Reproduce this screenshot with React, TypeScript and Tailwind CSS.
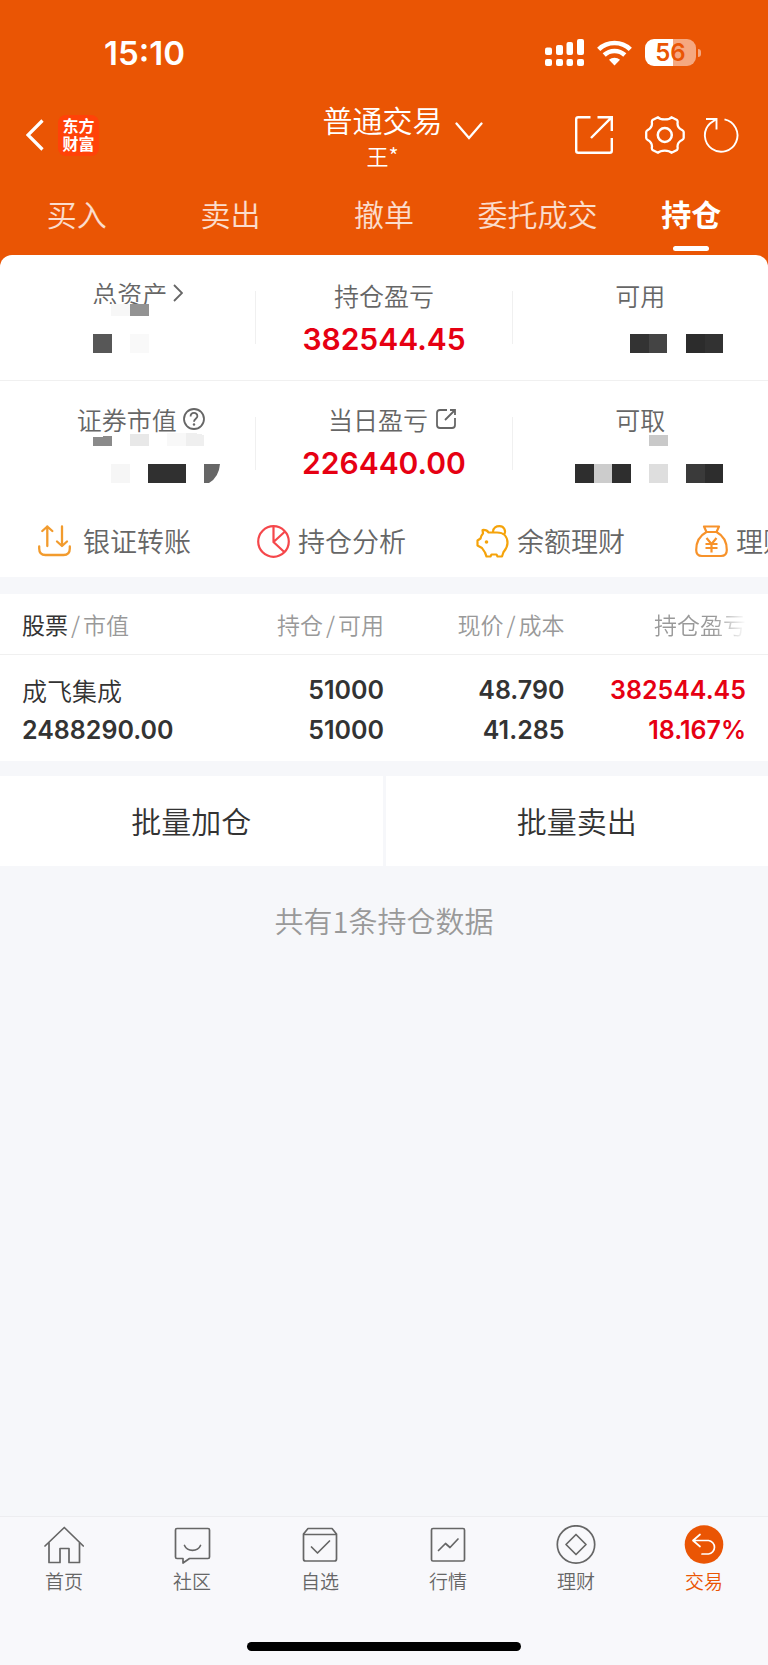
import type { ReactNode } from "react";

const tabs = ["买入", "卖出", "撤单", "委托成交", "持仓"];

type Block = [x: number, y: number, w: number, h: number, fill: string];

function SignalIcon() {
  return (
    <svg width="39" height="27" viewBox="0 0 39 27" fill="#fff" aria-hidden="true">
      <rect x="0" y="8.500" width="7" height="7.500" rx="2" />
      <rect x="11" y="6" width="7" height="10" rx="2" />
      <rect x="21.500" y="3" width="6.500" height="13" rx="2" />
      <rect x="32" y="0" width="7" height="16" rx="2" />
      <rect x="0" y="20" width="7" height="7" rx="2" />
      <rect x="11" y="20" width="7" height="7" rx="2" />
      <rect x="21.500" y="20" width="6.500" height="7" rx="2" />
      <rect x="32" y="20" width="7" height="7" rx="2" />
    </svg>
  );
}

function WifiIcon() {
  return (
    <svg width="35" height="26" viewBox="0 0 35 26" fill="none" stroke="#fff" strokeWidth="4.600" aria-hidden="true">
      <path d="M1.700 9.300C10.500 0.900 24.500 0.900 33.300 9.300" />
      <path d="M7.200 15C13 9.600 22 9.600 27.800 15" />
      <path d="M17.500 25.500L12 19.800C15 17 20 17 23 19.800Z" fill="#fff" stroke="none" />
    </svg>
  );
}

function Battery() {
  return (
    <div className="flex items-center gap-0.5">
      <div className="flex h-[27px] w-[51px] items-center justify-center rounded-[9px] bg-linear-to-r from-white from-55% to-[#f5a880] to-55% font-['Inter'] text-2xl font-semibold leading-none text-[#ea5504]">
        56
      </div>
      <div className="h-2 w-[3px] rounded-r-full bg-[#f5a880]" />
    </div>
  );
}

function BackIcon() {
  return (
    <svg width="18" height="32" viewBox="0 0 18 32" fill="none" stroke="#fff" strokeWidth="3.200" aria-hidden="true">
      <path d="M16.500 1.500L2 16L16.500 30.500" />
    </svg>
  );
}

function ChevronDown() {
  return (
    <svg width="28" height="18" viewBox="0 0 28 18" fill="none" stroke="#fff" strokeWidth="2.300" strokeLinecap="round" aria-hidden="true">
      <path d="M1.500 1.500L14 16L26.500 1.500" />
    </svg>
  );
}

function ShareIcon() {
  return (
    <svg width="38" height="38" viewBox="0 0 38 38" fill="none" stroke="#fff" strokeWidth="2.400" aria-hidden="true">
      <path d="M15.500 1.200H3.200Q1.200 1.200 1.200 3.200V34.800Q1.200 36.800 3.200 36.800H34.800Q36.800 36.800 36.800 34.800V22" />
      <path d="M22.500 1.200H36.800V15M36.800 1.200L16 22" />
    </svg>
  );
}

function GearIcon() {
  return (
    <svg width="40" height="38" viewBox="0 0 40 38" fill="none" stroke="#fff" strokeWidth="2.300" strokeLinejoin="round" aria-hidden="true">
      <path d="M13 1.200C15.500 4.200 24 4.200 26.500 1.200L32 4Q33 5 32.500 7.500C32.500 10.500 34 12.500 37 14Q38.700 15 38.700 16V22Q38.700 23 37 24C34 25.500 32.500 27.500 32.500 30.500Q33 33 32 34L26.500 36.800C24 33.800 15.500 33.800 13 36.800L7.500 34Q6.500 33 7 30.500C7 27.500 5.500 25.500 2.800 24Q1.200 23 1.200 22V16Q1.200 15 2.800 14C5.500 12.500 7 10.500 7 7.500Q6.500 5 7.500 4Z" />
      <circle cx="19.800" cy="19" r="7" strokeWidth="2.500" />
    </svg>
  );
}

function RefreshIcon() {
  return (
    <svg width="36" height="36" viewBox="0 0 36 36" fill="none" stroke="#fff" strokeWidth="1.900" aria-hidden="true">
      <path d="M21.500 2.400A16.300 16.300 0 1 1 7 6.500L13.500 2" />
      <path d="M3 2H13.500V12.500" />
    </svg>
  );
}

function TransferIcon() {
  return (
    <svg width="33" height="32" viewBox="0 0 33 32" fill="none" stroke="#f29b2d" strokeWidth="2.300" strokeLinecap="round" strokeLinejoin="round" aria-hidden="true">
      <path d="M9.300 21V1.500M4.300 6L9.300 1.500L14.300 6" />
      <path d="M24 1.500V21M19 16.500L24 21L29 16.500" />
      <path d="M1.200 21.500V23.500Q1.200 30 7.500 30H25.500Q31.800 30 31.800 23.500V21.500" />
    </svg>
  );
}

function PieIcon() {
  return (
    <svg width="33" height="33" viewBox="0 0 33 33" fill="none" stroke="#f5474b" strokeWidth="2.200" aria-hidden="true">
      <circle cx="16.500" cy="16.500" r="15.300" />
      <path d="M16.500 1V17L27.800 27.500M16.500 17L28 6.500" />
    </svg>
  );
}

function PiggyIcon() {
  return (
    <svg width="33" height="33" viewBox="0 0 33 33" fill="none" stroke="#f5a30a" strokeWidth="2.200" strokeLinejoin="round" aria-hidden="true">
      <path d="M7 8.500L6.500 5Q11 4.700 12.500 7.500H21C28 7.500 31.500 12 31.500 18C31.500 22.500 29 25 27.500 27L26 31.500H21.500L20.500 29.500H15.500L14.500 31.500H10.500L9 27.500L6 23L1.500 20.500V15.500L4.500 13.500Q5 10.500 7 8.500Z" />
      <path d="M17 7C17 2.500 20.500 1.200 23.500 1.200C28 1.200 30.500 6 28 9.500" />
      <circle cx="10.500" cy="17" r="1.800" fill="#f5a30a" stroke="none" />
    </svg>
  );
}

function MoneyBagIcon() {
  return (
    <svg width="33" height="33" viewBox="0 0 33 33" fill="none" stroke="#f7922a" strokeWidth="2.200" strokeLinejoin="round" aria-hidden="true">
      <path d="M9 1.500H24L21.500 7H11.500Z" />
      <path d="M11.500 7C4 11 1.200 18 1.200 25Q1.200 31 7 31H26Q31.800 31 31.800 25C31.800 18 29 11 21.500 7" />
      <path d="M11.500 13L16.500 19L21.500 13M16.500 19V27.500M10.500 19H22.500M10.500 23H22.500" />
    </svg>
  );
}

const quickLinks: { label: string; icon: ReactNode; gap: string }[] = [
  { label: "银证转账", icon: <TransferIcon />, gap: "gap-3" },
  { label: "持仓分析", icon: <PieIcon />, gap: "gap-2" },
  { label: "余额理财", icon: <PiggyIcon />, gap: "gap-2" },
  { label: "理财", icon: <MoneyBagIcon />, gap: "gap-2" },
];

function NavIcon({ children }: { children: ReactNode }) {
  return (
    <svg width="40" height="40" viewBox="0 0 40 40" fill="none" stroke="#666" strokeWidth="1.700" strokeLinejoin="round" strokeLinecap="round" aria-hidden="true">
      {children}
    </svg>
  );
}

const navItems: { label: string; active?: boolean; icon: ReactNode }[] = [
  {
    label: "首页",
    icon: (
      <NavIcon>
        <path d="M1 21L20.300 2.500L39.300 21" />
        <path d="M5 18V37.500H16V23.500H25V37.500H35.500V18" />
      </NavIcon>
    ),
  },
  {
    label: "社区",
    icon: (
      <NavIcon>
        <path d="M5 3.500H36Q37.500 3.500 37.500 5V32Q37.500 33.500 36 33.500H17.500L11 38V33.500H5Q3.500 33.500 3.500 32V5Q3.500 3.500 5 3.500Z" />
        <path d="M12.500 20.500C15.500 27 25.500 27 28.500 20.500" />
      </NavIcon>
    ),
  },
  {
    label: "自选",
    icon: (
      <NavIcon>
        <path d="M3.500 9L8 3.500H32L36.500 9V34Q36.500 36 34.500 36H5.500Q3.500 36 3.500 34ZM3.500 9.500H36.500" />
        <path d="M11.500 22L17.500 28L29.500 16" />
      </NavIcon>
    ),
  },
  {
    label: "行情",
    icon: (
      <NavIcon>
        <rect x="3.500" y="3.500" width="33" height="32.500" rx="1.500" />
        <path d="M10.500 25.500L17.500 18.500L22 22.500L30 14" />
      </NavIcon>
    ),
  },
  {
    label: "理财",
    icon: (
      <NavIcon>
        <circle cx="20" cy="19.500" r="18.700" />
        <path d="M20 9.500L30 19.500L20 29.500L10 19.500Z" />
      </NavIcon>
    ),
  },
  {
    label: "交易",
    active: true,
    icon: (
      <NavIcon>
        <circle cx="20" cy="19.500" r="19.300" fill="#ea5504" stroke="none" />
        <path d="M16 9.500L9 15.500L16 21.500M9 15.500H24.500A6.800 6.800 0 0 1 24.500 29H18" stroke="#fff" />
      </NavIcon>
    ),
  },
];

// Pixelated cover over private amounts
function Mosaic({ blocks, children }: { blocks: Block[]; children?: ReactNode }) {
  return (
    <svg className="absolute left-0 top-0" width="256" height="124" viewBox="0 0 256 124" shapeRendering="crispEdges" aria-hidden="true">
      {blocks.map(([x, y, w, h, fill]) => (
        <rect key={`${x}-${y}`} x={x} y={y} width={w} height={h} fill={fill} />
      ))}
      {children}
    </svg>
  );
}

function Stat({ label, value, children }: { label: ReactNode; value?: string; children?: ReactNode }) {
  return (
    <div className="relative flex flex-1 flex-col items-center gap-2.5">
      <div className="flex h-8 items-center gap-1.5 text-[25px] leading-8 text-[#666]">{label}</div>
      <div className="h-9 font-['Inter'] text-[30px] font-semibold leading-9 text-[#e60012]">{value}</div>
      {children}
    </div>
  );
}

function StatDivider() {
  return <div className="h-[53px] w-px self-center bg-[#f0f0f0]" />;
}

export default function App() {
  return (
    <div className="flex min-h-screen flex-col overflow-x-hidden bg-[#f6f7fa] font-['Noto_Sans_CJK_SC',sans-serif] font-[350] text-[#333]">
      <header className="bg-[#ea5504] text-white">
        <div className="flex h-[99px] items-center justify-between pl-[104px] pr-[67px] pt-1.5">
          <span className="font-['Inter'] text-[33px] font-semibold leading-10">15:10</span>
          <div className="flex items-center gap-[13px]">
            <SignalIcon />
            <WifiIcon />
            <Battery />
          </div>
        </div>

        <div className="grid h-[72px] grid-cols-[1fr_auto_1fr] items-center pl-[26px] pr-[29px]">
          <div className="flex items-center gap-3.5">
            <button type="button" aria-label="返回">
              <BackIcon />
            </button>
            <div className="flex h-[41px] w-[41px] flex-col items-center justify-center rounded-lg bg-[#ff4208] pb-0.5 text-base font-bold leading-[18px]">
              <span>东方</span>
              <span>财富</span>
            </div>
          </div>
          <div className="flex flex-col items-center">
            <h1 className="text-[30px] leading-10">普通交易</h1>
            <p className="text-[22px] leading-8">王*</p>
          </div>
          <div className="flex items-center pl-3">
            <button type="button" aria-label="切换账户" className="-mt-2">
              <ChevronDown />
            </button>
            <button type="button" aria-label="分享" className="ml-auto">
              <ShareIcon />
            </button>
            <button type="button" aria-label="设置" className="ml-8">
              <GearIcon />
            </button>
            <button type="button" aria-label="刷新" className="ml-[18px]">
              <RefreshIcon />
            </button>
          </div>
        </div>

        <nav className="grid grid-cols-5 pb-1 pt-6">
          {tabs.map((tab) => {
            const active = tab === "持仓";
            return (
              <button key={tab} type="button" className="flex flex-col items-center gap-[15px]">
                <span className={active ? "text-[30px] font-bold leading-9" : "text-[30px] leading-9 text-white/80"}>{tab}</span>
                <span className={active ? "h-[5px] w-9 rounded-full bg-white" : "h-[5px] w-9"} />
              </button>
            );
          })}
        </nav>
      </header>

      <main className="flex-1">
        <div className="bg-[#ea5504]">
          <section className="rounded-t-xl bg-white">
            <div className="flex border-b border-[#f0f0f0]">
              <div className="flex flex-1 pb-[25px] pt-[22px]">
                <Stat
                  label={
                    <span className="flex items-center gap-1.5 pl-5">
                      总资产
                      <svg width="10" height="18" viewBox="0 0 10 18" fill="none" stroke="#666" strokeWidth="1.800" aria-hidden="true">
                        <path d="M1 1L9 9L1 17" />
                      </svg>
                    </span>
                  }
                >
                  <Mosaic
                    blocks={[
                      [92, 27, 76, 12, "#fff"],
                      [111, 27, 19, 12, "#f7f7f7"],
                      [130, 27, 19, 12, "#939393"],
                      [93, 57, 19, 19, "#575757"],
                      [130, 57, 19, 19, "#f9f9f9"],
                    ]}
                  />
                </Stat>
              </div>
              <StatDivider />
              <div className="flex flex-1 pb-[23px] pt-6">
                <Stat label="持仓盈亏" value="382544.45" />
              </div>
              <StatDivider />
              <div className="flex flex-1 pb-[23px] pt-6">
                <Stat label="可用">
                  <Mosaic
                    blocks={[
                      [117, 55, 19, 19, "#333"],
                      [136, 55, 18, 19, "#444"],
                      [173, 55, 19, 19, "#2c2c2c"],
                      [192, 55, 18, 19, "#323232"],
                    ]}
                  />
                </Stat>
              </div>
            </div>

            <div className="flex">
              <div className="flex flex-1 pb-6 pt-[22px]">
                <Stat
                  label={
                    <span className="flex items-center gap-1.5 pl-[26px]">
                      证券市值
                      <svg width="22" height="22" viewBox="0 0 22 22" fill="none" stroke="#666" strokeWidth="1.800" aria-hidden="true">
                        <circle cx="11" cy="11" r="10" />
                        <path d="M7.600 8.500C7.600 3.800 14.400 3.900 14.400 8.200C14.400 10.600 11 11 11 13.700" />
                        <circle cx="11" cy="16.500" r="1.200" fill="#666" stroke="none" />
                      </svg>
                    </span>
                  }
                >
                  <Mosaic
                    blocks={[
                      [130, 31, 19, 12, "#e8e8e8"],
                      [167, 30, 19, 13, "#f8f8f8"],
                      [111, 61, 19, 19, "#f6f6f6"],
                      [148, 61, 38, 19, "#303030"],
                    ]}
                  >
                    <path d="M93 34L112 33V43H93Z" fill="#8a8a8a" />
                    <path d="M186 30Q198 30 204 32V43H186Z" fill="#efefef" />
                    <path d="M204 61H220Q219 74 209 80H204Z" fill="#666" shapeRendering="auto" />
                  </Mosaic>
                </Stat>
              </div>
              <StatDivider />
              <div className="flex flex-1 pb-6 pt-[22px]">
                <Stat
                  label={
                    <span className="flex items-center gap-2 pl-4">
                      当日盈亏
                      <svg width="20" height="20" viewBox="0 0 20 20" fill="none" stroke="#666" strokeWidth="1.800" aria-hidden="true">
                        <path d="M11 1H4Q1 1 1 4V16Q1 19 4 19H16Q19 19 19 16V9" />
                        <path d="M14 1H19V6M19 1L9 11" />
                      </svg>
                    </span>
                  }
                  value="226440.00"
                />
              </div>
              <StatDivider />
              <div className="flex flex-1 pb-6 pt-[22px]">
                <Stat label="可取">
                  <Mosaic
                    blocks={[
                      [136, 32, 19, 11, "#c9c9c9"],
                      [62, 61, 19, 19, "#2e2e2e"],
                      [81, 61, 18, 19, "#ccc"],
                      [99, 61, 19, 19, "#2e2e2e"],
                      [136, 61, 19, 19, "#dedede"],
                      [173, 61, 19, 19, "#3a3a3a"],
                      [192, 61, 18, 19, "#2d2d2d"],
                    ]}
                  />
                </Stat>
              </div>
            </div>

            <div className="flex h-[72px] items-center overflow-hidden pl-[38px]">
              {quickLinks.map((link) => (
                <a key={link.label} href="#" className={`flex w-[219px] shrink-0 items-center ${link.gap} text-[27px] leading-9 text-[#666]`}>
                  {link.icon}
                  {link.label}
                </a>
              ))}
            </div>
          </section>
        </div>

        <section className="mt-[17px] bg-white">
          <table className="w-full table-fixed">
            <thead>
              <tr className="h-[60px] border-b border-[#f0f0f0] text-right text-[23px] text-[#999]">
                <th className="w-[32%] pl-[22px] text-left font-[350]">
                  <span className="font-normal text-[#333]">股票</span>
                  <span className="px-[3px]">/</span>市值
                </th>
                <th className="w-[18%] font-[350]">
                  持仓<span className="px-[3px]">/</span>可用
                </th>
                <th className="w-[23.5%] font-[350]">
                  现价<span className="px-[3px]">/</span>成本
                </th>
                <th className="pr-[22px] font-[350]">
                  <span className="inline-block bg-linear-to-r from-[#999] from-65% to-transparent bg-clip-text text-transparent">持仓盈亏</span>
                </th>
              </tr>
            </thead>
            <tbody>
              <tr className="text-right font-['Inter'] text-[25px] font-semibold leading-10">
                <td className="pb-[11px] pl-[22px] pt-[15px] text-left">
                  <span className="block font-['Noto_Sans_CJK_SC',sans-serif] font-[350]">成飞集成</span>
                  <span className="block">2488290.00</span>
                </td>
                <td className="pb-[11px] pt-[15px]">
                  <span className="block">51000</span>
                  <span className="block">51000</span>
                </td>
                <td className="pb-[11px] pt-[15px]">
                  <span className="block">48.790</span>
                  <span className="block">41.285</span>
                </td>
                <td className="pb-[11px] pr-[22px] pt-[15px] text-[#e60012]">
                  <span className="block">382544.45</span>
                  <span className="block">18.167%</span>
                </td>
              </tr>
            </tbody>
          </table>
        </section>

        <div className="mt-[15px] grid grid-cols-2 gap-[3px]">
          <button type="button" className="h-[90px] bg-white text-[30px]">
            批量加仓
          </button>
          <button type="button" className="h-[90px] bg-white text-[30px]">
            批量卖出
          </button>
        </div>

        <p className="mt-[34px] text-center text-[29px] leading-10 text-[#999]">共有1条持仓数据</p>
      </main>

      <footer className="border-t border-[#ededf0] bg-[#f8f8fb]">
        <nav className="grid grid-cols-6 pt-2">
          {navItems.map((item) => (
            <a key={item.label} href="#" className={item.active ? "flex flex-col items-center gap-1 text-[#ea5504]" : "flex flex-col items-center gap-1 text-[#666]"}>
              {item.icon}
              <span className="text-[19px] leading-6">{item.label}</span>
            </a>
          ))}
        </nav>
        <div className="mx-auto mb-[14px] mt-[49px] h-[9px] w-[274px] rounded-full bg-black" />
      </footer>
    </div>
  );
}
